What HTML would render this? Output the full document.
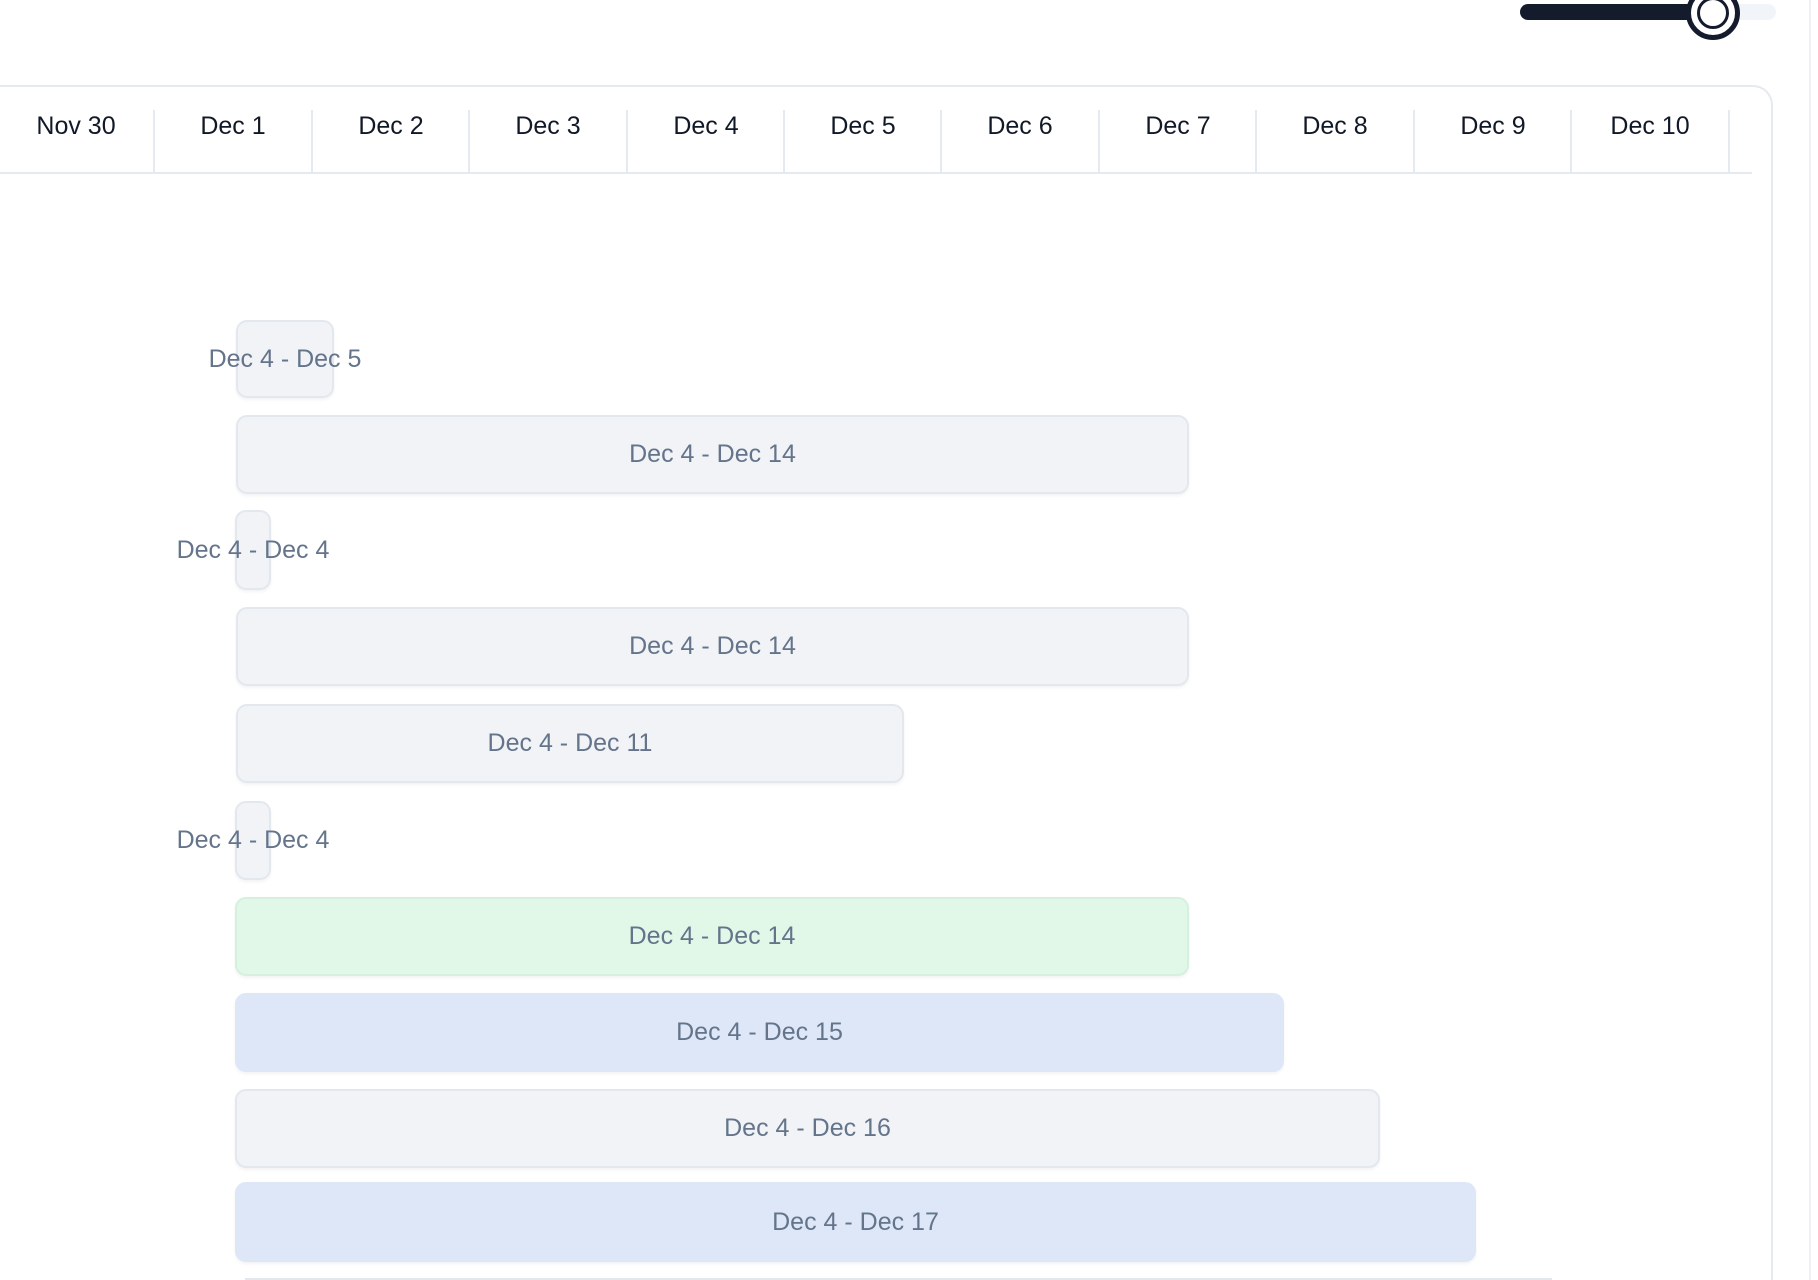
<!DOCTYPE html>
<html><head><meta charset="utf-8"><style>
html,body{margin:0;padding:0;width:1818px;height:1280px;overflow:hidden;background:#fff;font-family:"Liberation Sans",sans-serif;}
#wrap{position:relative;width:1818px;height:1280px;overflow:hidden;}
.abs{position:absolute;}
.box{position:absolute;left:-20px;top:85px;width:1793px;height:1195px;box-sizing:border-box;border:2px solid #e5e9f0;border-bottom:none;border-radius:20px 20px 0 0;}
.hline{position:absolute;left:0;top:172px;width:1752px;height:2px;background:#e5e9f0;}
.sep{position:absolute;top:110px;width:2px;height:63px;background:#e5e9f0;}
.hd{position:absolute;top:111px;width:158px;text-align:center;font-size:25px;color:#111827;line-height:30px;}
.bar{position:absolute;box-sizing:border-box;background:#f1f3f6;border:2px solid #e3e8ef;border-radius:11px;box-shadow:0 2px 3px rgba(0,0,0,0.05);display:flex;align-items:center;justify-content:center;font-size:25px;color:#64748b;white-space:nowrap;}
.bar span{display:block}
.g{background:#e1f8e9;border-color:#d6f0df;}
.b{background:#dde7f8;border-color:#dde7f8;}
</style></head><body><div id="wrap">
<div class="abs" style="left:1809px;top:0;width:2px;height:1280px;background:#eef0f4"></div>
<div class="abs" style="left:1520px;top:4px;width:256px;height:16px;border-radius:8px;background:#f1f4f9"></div>
<div class="abs" style="left:1520px;top:4px;width:195px;height:16px;border-radius:8px;background:#141b2d"></div>
<div class="abs" style="left:1686px;top:-14px;width:54px;height:54px;box-sizing:border-box;border-radius:50%;background:#fff;border:5px solid #141b2d"></div>
<div class="abs" style="left:1697px;top:-3px;width:32px;height:32px;border-radius:50%;background:#fff;border:3px solid #141b2d;box-sizing:border-box"></div>
<div class="box"></div>
<div class="hline"></div>
<div class="hd" style="left:-3px">Nov 30</div>
<div class="hd" style="left:154px">Dec 1</div>
<div class="hd" style="left:312px">Dec 2</div>
<div class="hd" style="left:469px">Dec 3</div>
<div class="hd" style="left:627px">Dec 4</div>
<div class="hd" style="left:784px">Dec 5</div>
<div class="hd" style="left:941px">Dec 6</div>
<div class="hd" style="left:1099px">Dec 7</div>
<div class="hd" style="left:1256px">Dec 8</div>
<div class="hd" style="left:1414px">Dec 9</div>
<div class="hd" style="left:1571px">Dec 10</div>
<div class="sep" style="left:153px"></div><div class="sep" style="left:311px"></div><div class="sep" style="left:468px"></div><div class="sep" style="left:626px"></div><div class="sep" style="left:783px"></div><div class="sep" style="left:940px"></div><div class="sep" style="left:1098px"></div><div class="sep" style="left:1255px"></div><div class="sep" style="left:1413px"></div><div class="sep" style="left:1570px"></div><div class="sep" style="left:1728px"></div>

<div class="bar" style="left:236px;top:320px;width:98px;height:78px"><span>Dec 4 - Dec 5</span></div>
<div class="bar" style="left:236px;top:415px;width:953px;height:79px"><span>Dec 4 - Dec 14</span></div>
<div class="bar" style="left:235px;top:510px;width:36px;height:80px"><span>Dec 4 - Dec 4</span></div>
<div class="bar" style="left:236px;top:607px;width:953px;height:79px"><span>Dec 4 - Dec 14</span></div>
<div class="bar" style="left:236px;top:704px;width:668px;height:79px"><span>Dec 4 - Dec 11</span></div>
<div class="bar" style="left:235px;top:801px;width:36px;height:79px"><span>Dec 4 - Dec 4</span></div>
<div class="bar g" style="left:235px;top:897px;width:954px;height:79px"><span>Dec 4 - Dec 14</span></div>
<div class="bar b" style="left:235px;top:993px;width:1049px;height:79px"><span>Dec 4 - Dec 15</span></div>
<div class="bar" style="left:235px;top:1089px;width:1145px;height:79px"><span>Dec 4 - Dec 16</span></div>
<div class="bar b" style="left:235px;top:1182px;width:1241px;height:80px"><span>Dec 4 - Dec 17</span></div>
<div class="abs" style="left:245px;top:1278px;width:1307px;height:2px;background:#e3e8ef"></div>
</div></body></html>
